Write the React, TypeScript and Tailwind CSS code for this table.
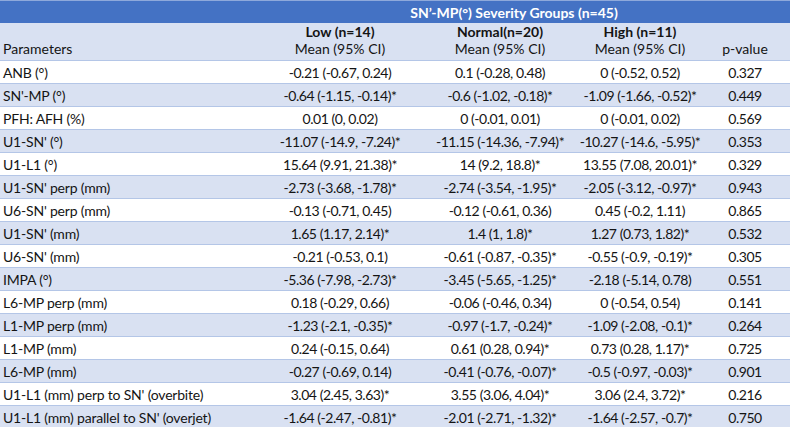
import React from 'react';

type Row = [string, string, string, string, string];

const rows: Row[] = [
  ['ANB (°)', '-0.21 (-0.67, 0.24)', '0.1 (-0.28, 0.48)', '0 (-0.52, 0.52)', '0.327'],
  ["SN'-MP (°)", '-0.64 (-1.15, -0.14)*', '-0.6 (-1.02, -0.18)*', '-1.09 (-1.66, -0.52)*', '0.449'],
  ['PFH: AFH (%)', '0.01 (0, 0.02)', '0 (-0.01, 0.01)', '0 (-0.01, 0.02)', '0.569'],
  ["U1-SN' (°)", '-11.07 (-14.9, -7.24)*', '-11.15 (-14.36, -7.94)*', '-10.27 (-14.6, -5.95)*', '0.353'],
  ['U1-L1 (°)', '15.64 (9.91, 21.38)*', '14 (9.2, 18.8)*', '13.55 (7.08, 20.01)*', '0.329'],
  ["U1-SN' perp (mm)", '-2.73 (-3.68, -1.78)*', '-2.74 (-3.54, -1.95)*', '-2.05 (-3.12, -0.97)*', '0.943'],
  ["U6-SN' perp (mm)", '-0.13 (-0.71, 0.45)', '-0.12 (-0.61, 0.36)', '0.45 (-0.2, 1.11)', '0.865'],
  ["U1-SN' (mm)", '1.65 (1.17, 2.14)*', '1.4 (1, 1.8)*', '1.27 (0.73, 1.82)*', '0.532'],
  ["U6-SN' (mm)", '-0.21 (-0.53, 0.1)', '-0.61 (-0.87, -0.35)*', '-0.55 (-0.9, -0.19)*', '0.305'],
  ['IMPA (°)', '-5.36 (-7.98, -2.73)*', '-3.45 (-5.65, -1.25)*', '-2.18 (-5.14, 0.78)', '0.551'],
  ['L6-MP perp (mm)', '0.18 (-0.29, 0.66)', '-0.06 (-0.46, 0.34)', '0 (-0.54, 0.54)', '0.141'],
  ['L1-MP perp (mm)', '-1.23 (-2.1, -0.35)*', '-0.97 (-1.7, -0.24)*', '-1.09 (-2.08, -0.1)*', '0.264'],
  ['L1-MP (mm)', '0.24 (-0.15, 0.64)', '0.61 (0.28, 0.94)*', '0.73 (0.28, 1.17)*', '0.725'],
  ['L6-MP (mm)', '-0.27 (-0.69, 0.14)', '-0.41 (-0.76, -0.07)*', '-0.5 (-0.97, -0.03)*', '0.901'],
  ["U1-L1 (mm) perp to SN' (overbite)", '3.04 (2.45, 3.63)*', '3.55 (3.06, 4.04)*', '3.06 (2.4, 3.72)*', '0.216'],
  ["U1-L1 (mm) parallel to SN' (overjet)", '-1.64 (-2.47, -0.81)*', '-2.01 (-2.71, -1.32)*', '-1.64 (-2.57, -0.7)*', '0.750'],
];

const cols = 'grid grid-cols-[242px_196px_124px_156px_72px]';
const cell = 'flex items-end justify-center pb-[3px] whitespace-nowrap tracking-[-0.45px]';

const App: React.FC = () => {
  return (
    <div className="w-[790px] h-[427px] overflow-hidden bg-white text-[14px] leading-none text-[#141414] font-['Lato',sans-serif]">
      <div className={`${cols} h-[23px] bg-[#4472C4] border-t border-[#8EA9DB]`}>
        <div />
        <div className="col-span-4 flex items-end justify-center pb-[3px] pr-[4px] font-bold text-white whitespace-nowrap">
          SN’-MP(°) Severity Groups (n=45)
        </div>
      </div>
      <div className={`${cols} h-[37px] bg-[#D9E1F2]`}>
        <div className="flex items-end pl-[3px] pb-[4px]">Parameters</div>
        {['Low (n=14)', 'Normal(n=20)', 'High (n=11)'].map(label => (
          <div key={label} className="flex flex-col items-center justify-end pb-[4px] gap-[3px] whitespace-nowrap">
            <span className="font-bold">{label}</span>
            <span>Mean (95% CI)</span>
          </div>
        ))}
        <div className="flex items-end justify-center pr-[18px] pb-[4px]">p-value</div>
      </div>
      {rows.map((r, i) => (
        <div
          key={r[0]}
          className={`${cols} h-[23px] border-t border-[#B4C6E7] ${i % 2 === 0 ? 'bg-white' : 'bg-[#D9E1F2]'}`}
        >
          <div className="flex items-end pl-[3px] pb-[3px] whitespace-nowrap tracking-[-0.2px]">{r[0]}</div>
          <div className={cell}>{r[1]}</div>
          <div className={cell}>{r[2]}</div>
          <div className={cell}>{r[3]}</div>
          <div className={`${cell} pr-[18px]`}>{r[4]}</div>
        </div>
      ))}
    </div>
  );
};

export default App;
